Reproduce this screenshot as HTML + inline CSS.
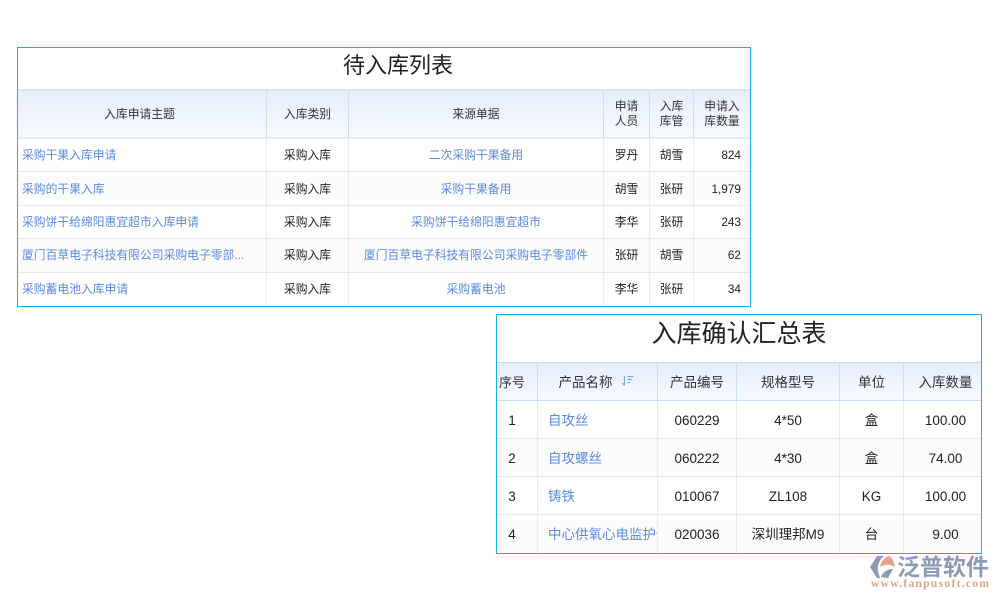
<!DOCTYPE html>
<html><head><meta charset="utf-8">
<style>
html,body{margin:0;padding:0;background:#fff}
body{width:1000px;height:600px;position:relative;overflow:hidden;font-family:"Liberation Sans","Noto Sans CJK SC",sans-serif;color:#222}
.box{position:absolute;box-sizing:border-box;border:1px solid #1cb0e8;background:#fff;overflow:hidden}
table{border-collapse:separate;border-spacing:0;table-layout:fixed;position:absolute;left:0}
td,th{box-sizing:border-box;padding:0;font-weight:400;text-align:center;white-space:nowrap;overflow:hidden;border-right:1px solid #e8ecf0;border-bottom:1px solid #e8e8e8;line-height:16px}
th{background:linear-gradient(#e6eefb,#f6faff);border-right:1px solid #cbdff0;color:#333}
td:last-child,th:last-child{border-right:0}
tr:nth-child(odd) td{background:#fcfcfc}
.a{color:#5b8ae0}
.l{text-align:left}
.title{position:absolute;left:0;right:0;text-align:center;color:#222}
#t1 table{font-size:11.8px;top:41px;width:732px}
#t1 th{height:50px;line-height:15px;border-top:2px solid #dde6f2;border-bottom:2px solid #e3edf7}
#t1 th:first-child{padding-right:5px}
#t1 td{height:33.4px}
#t1 .l{padding-left:4px}
#t1 .r{text-align:right;padding-right:9px}
#t2 table{font-size:13.5px;top:47px;width:484px}
#t2 th{height:39px;padding-top:2px;border-top:1px solid #c9dcf0;border-bottom:1px solid #c9e0f2}
#t2 td{height:38px;padding-top:2px}
#t2 .l{padding-left:10px}
#t2 td:first-child{padding-right:10px}
#t2 th:first-child{padding-right:10px;font-size:13px}
#t2 td:last-child,#t2 th:last-child{padding-left:6px}
</style></head><body>

<div class="box" id="t1" style="left:17px;top:47px;width:734px;height:260px">
<div class="title" style="top:0;left:28px;font-size:22px;line-height:36px">待入库列表</div>
<table>
<colgroup><col style="width:249px"><col style="width:82px"><col style="width:255px"><col style="width:46px"><col style="width:44px"><col style="width:56px"></colgroup>
<tr><th>入库申请主题</th><th>入库类别</th><th>来源单据</th><th>申请<br>人员</th><th>入库<br>库管</th><th>申请入<br>库数量</th></tr>
<tr><td class="l a">采购干果入库申请</td><td>采购入库</td><td class="a">二次采购干果备用</td><td>罗丹</td><td>胡雪</td><td class="r">824</td></tr>
<tr><td class="l a">采购的干果入库</td><td>采购入库</td><td class="a">采购干果备用</td><td>胡雪</td><td>张研</td><td class="r">1,979</td></tr>
<tr><td class="l a">采购饼干给绵阳惠宜超市入库申请</td><td>采购入库</td><td class="a">采购饼干给绵阳惠宜超市</td><td>李华</td><td>张研</td><td class="r">243</td></tr>
<tr><td class="l a">厦门百草电子科技有限公司采购电子零部...</td><td>采购入库</td><td class="a">厦门百草电子科技有限公司采购电子零部件</td><td>张研</td><td>胡雪</td><td class="r">62</td></tr>
<tr><td class="l a" style="border-bottom:0">采购蓄电池入库申请</td><td style="border-bottom:0">采购入库</td><td class="a" style="border-bottom:0">采购蓄电池</td><td style="border-bottom:0">李华</td><td style="border-bottom:0">张研</td><td class="r" style="border-bottom:0">34</td></tr>
</table>
</div>

<div class="box" id="t2" style="left:496px;top:314px;width:486px;height:240px">
<div class="title" style="top:0;font-size:25px;line-height:38px">入库确认汇总表</div>
<table>
<colgroup><col style="width:41px"><col style="width:120px"><col style="width:79px"><col style="width:103px"><col style="width:64px"><col style="width:77px"></colgroup>
<tr><th>序号</th><th style="position:relative"><span style="position:relative;left:-12px">产品名称</span><svg style="position:absolute;left:83px;top:12px" width="14" height="12" viewBox="0 0 14 12" fill="none" stroke="#7aa6d8" stroke-width="1.2"><path d="M3.5 1V10M1.5 8L3.5 10.5M6.5 1.5H12.5M6.5 4.5H11M6.5 7.5H9"/></svg></th><th>产品编号</th><th>规格型号</th><th>单位</th><th>入库数量</th></tr>
<tr><td>1</td><td class="l a">自攻丝</td><td>060229</td><td>4*50</td><td>盒</td><td>100.00</td></tr>
<tr><td>2</td><td class="l a">自攻螺丝</td><td>060222</td><td>4*30</td><td>盒</td><td>74.00</td></tr>
<tr><td>3</td><td class="l a">铸铁</td><td>010067</td><td>ZL108</td><td>KG</td><td>100.00</td></tr>
<tr><td style="border-bottom:0">4</td><td class="l a" style="border-bottom:0">中心供氧心电监护仪</td><td style="border-bottom:0">020036</td><td style="border-bottom:0">深圳理邦M9</td><td style="border-bottom:0">台</td><td style="border-bottom:0">9.00</td></tr>
</table>
</div>

<svg style="position:absolute;left:870px;top:555px" width="28" height="24" viewBox="0 0 28 24">
<path d="M7 1H14C9 5 7 11 8 17L10 23H7L0 12Z" fill="#8b9bb3"/>
<path d="M10 12C11 6 15 2 19 1C23 3 24 8 25 12C20 9 15 9 10 12Z" fill="#e0a488"/>
<path d="M11 22C12 18 17 14 23 14L18 23Z" fill="#8b9bb3"/>
</svg>
<div style="position:absolute;left:897px;top:553px;font-size:23px;line-height:28px;color:#8c9bb4;font-weight:700;white-space:nowrap">泛普软件</div>
<div style="position:absolute;left:871px;top:577px;font-size:11.5px;line-height:14px;color:#e0a488;font-family:'Liberation Serif',serif;font-weight:700;letter-spacing:1.3px;white-space:nowrap">www.fanpusoft.com</div>

</body></html>
